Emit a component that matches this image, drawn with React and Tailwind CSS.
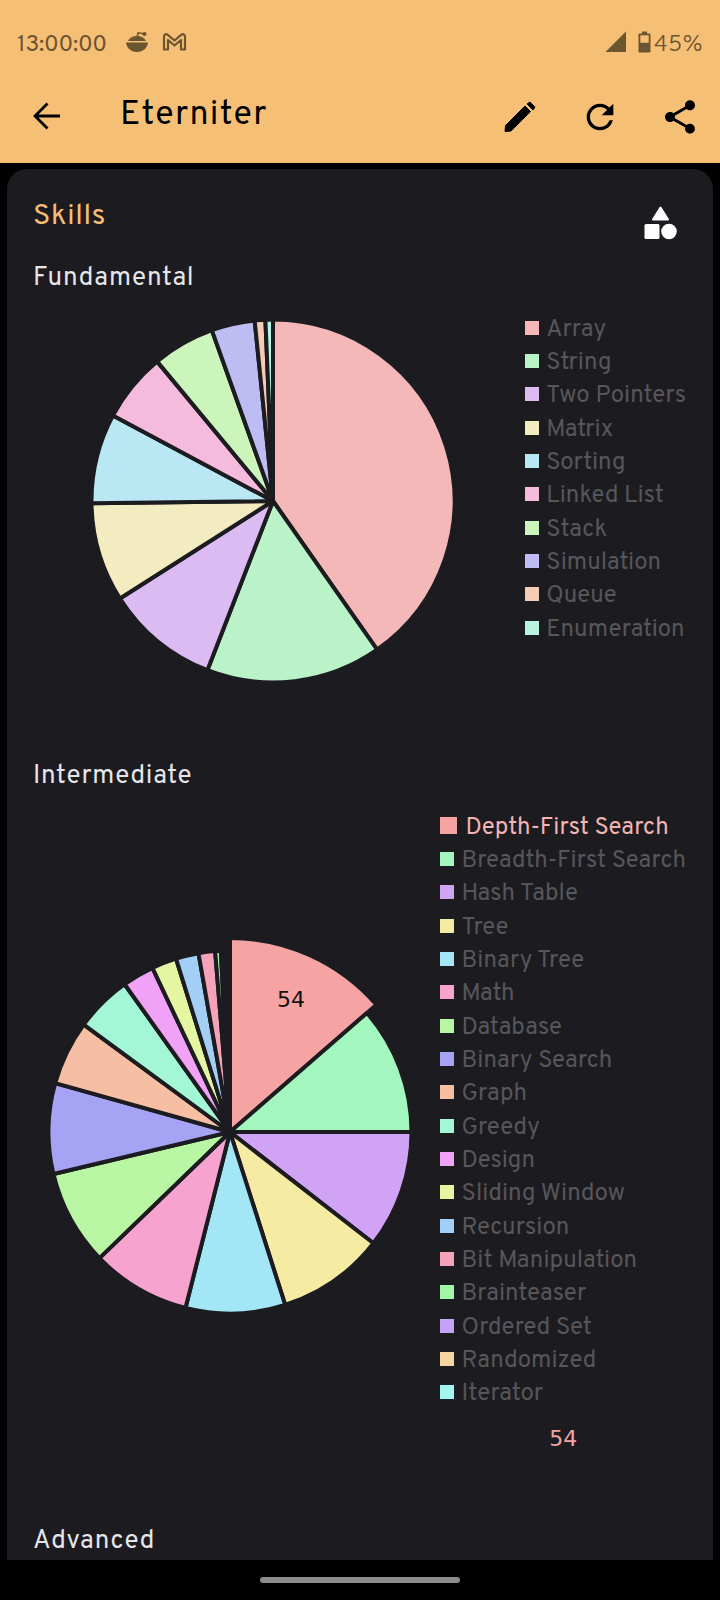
const FONT = "font-['Overpass','Roboto','Noto_Sans',sans-serif]";

const fundamental = [
  ["Array", "#F4B8B8", 145],
  ["String", "#BBF3C9", 201.2],
  ["Two Pointers", "#DBBBF2", 237.5],
  ["Matrix", "#F3ECC0", 269.3],
  ["Sorting", "#B9E8F4", 298.1],
  ["Linked List", "#F4BBDC", 320.3],
  ["Stack", "#CCF5BC", 340.3],
  ["Simulation", "#BDBDF3", 354.2],
  ["Queue", "#F4CBB3", 357.6],
  ["Enumeration", "#B8F3DF", 360],
];

const intermediate = [
  ["Depth-First Search", "#F6A3A3", 49],
  ["Breadth-First Search", "#A3F6BE", 90],
  ["Hash Table", "#D0A3F5", 127.8],
  ["Tree", "#F6EBA3", 162.3],
  ["Binary Tree", "#A3E7F6", 194.2],
  ["Math", "#F6A3D0", 226],
  ["Database", "#B9F6A3", 256.6],
  ["Binary Search", "#A6A3F5", 285.6],
  ["Graph", "#F6BFA3", 306.3],
  ["Greedy", "#A3F6D6", 324.5],
  ["Design", "#F0A3F6", 334.7],
  ["Sliding Window", "#E5F6A3", 342.7],
  ["Recursion", "#A3CFF6", 350],
  ["Bit Manipulation", "#F6A3BA", 355.3],
  ["Brainteaser", "#A3F6A8", 357.1],
  ["Ordered Set", "#C6A3F6", 358],
  ["Randomized", "#F6D5A3", 359],
  ["Iterator", "#A3F6F0", 360],
];

function slice(cx, cy, r, a0, a1) {
  const p = (a) => {
    const t = (a * Math.PI) / 180;
    return [cx + r * Math.sin(t), cy - r * Math.cos(t)];
  };
  const [x0, y0] = p(a0);
  const [x1, y1] = p(a1);
  return `M${cx} ${cy}L${x0} ${y0}A${r} ${r} 0 ${a1 - a0 > 180 ? 1 : 0} 1 ${x1} ${y1}Z`;
}

function Pie({ data, size, active, label }) {
  const c = size / 2;
  let start = 0;
  return (
    <svg width={size} height={size} viewBox={`0 0 ${size} ${size}`} className="block shrink-0">
      {data.map(([name, color, end], i) => {
        const d = slice(c, c, i === active ? 194 : 181.5, start, end);
        start = end;
        return <path key={name} d={d} fill={color} stroke="#1C1C20" strokeWidth="4" strokeLinejoin="round" />;
      })}
      {label ? (
        <text x={c + 61} y={c - 125} textAnchor="middle" fontSize="22" fontFamily="'DejaVu Sans', sans-serif" fill="#111111">
          {label}
        </text>
      ) : null}
    </svg>
  );
}

function Legend({ data, active, value }) {
  return (
    <div className="ml-[14px] flex shrink-0 flex-col">
      {data.map(([name, color], i) =>
        i === active ? (
          <div key={name} className="flex h-[33.33px] items-center">
            <span className="mr-[8px] h-[17px] w-[17px]" style={{ backgroundColor: color }} />
            <span className="pt-[4px] text-[24px] leading-none tracking-[0.05px] text-[#F4B4B4]">{name}</span>
          </div>
        ) : (
          <div key={name} className="flex h-[33.33px] items-center">
            <span className="mr-[7px] h-[14px] w-[14px]" style={{ backgroundColor: color }} />
            <span className="pt-[4px] text-[24px] leading-none tracking-[0.05px] text-[#56565B]">{name}</span>
          </div>
        )
      )}
      {value ? (
        <div className="flex h-[46px] items-end justify-center font-['DejaVu_Sans',sans-serif] text-[22px] leading-[32px] text-[#F5A3A3]">
          {value}
        </div>
      ) : null}
    </div>
  );
}

function Heading({ children }) {
  return <h2 className="-ml-[1px] flex h-[36px] items-center pt-[7px] text-[26px] tracking-[0.75px] text-[#E6E6EA]">{children}</h2>;
}

export default function App() {
  return (
    <div className={`flex h-[1600px] w-[720px] flex-col overflow-hidden bg-black ${FONT}`}>
      <header className="h-[163px] shrink-0 bg-[#F6BF76]">
        <div className="flex h-[87px] items-center text-[#6B5430]">
          <span className="ml-[17px] pt-[4px] text-[23px] leading-none tracking-[-0.2px]">13:00:00</span>
          <svg className="mb-[3px] ml-[18px]" width="24" height="22" viewBox="0 0 24 22" fill="#6B5430">
            <path d="M1 11.500h22c-.6 5.500-5 9.500-11 9.500S1.600 17 1 11.500z" />
            <path d="M3 10c1.500-3.200 5-5 9-5s7.500 1.800 9 5z" />
            <path d="M12 6l1.200-4.200 5.300 1" fill="none" stroke="#6B5430" strokeWidth="1.600" />
            <circle cx="19.500" cy="3" r="2" />
          </svg>
          <svg className="mb-[3px] ml-[13px]" width="25" height="20" viewBox="0 0 25 20" fill="none" stroke="#6B5430" strokeWidth="2.200" strokeLinejoin="round">
            <path d="M2 17.500V4.500C2 2.500 4 1.500 5.500 2.700L12.500 8.500L19.500 2.700C21 1.500 23 2.500 23 4.500V17.500H19V8L12.500 13.500L6 8V17.500Z" />
          </svg>
          <svg className="mb-[3px] ml-auto" width="22" height="22" viewBox="0 0 22 22" fill="#6B5430">
            <path d="M21 0.500V21H0.500Z" />
          </svg>
          <svg className="mb-[3px] ml-[11px]" width="13" height="22" viewBox="0 0 13 22">
            <path d="M4 0.500h5v2H11.500a1 1 0 0 1 1 1V20.500a1 1 0 0 1-1 1H1.500a1 1 0 0 1-1-1V3.500a1 1 0 0 1 1-1H4z" fill="#6B5430" />
            <rect x="2.300" y="4.300" width="8.400" height="7.500" fill="#F6BF76" />
          </svg>
          <span className="mr-[17px] ml-[3px] pt-[4px] text-[23px] leading-none font-light tracking-[0.3px]">45%</span>
        </div>
        <div className="flex h-[60px] items-center">
          <button className="mb-[2px] flex w-[94px] justify-center">
            <svg width="28" height="28" viewBox="0 0 28 28" fill="none" stroke="#000" strokeWidth="2.800">
              <path d="M27 14H2M14.500 1.500L2 14l12.500 12.500" />
            </svg>
          </button>
          <h1 className="mb-[2px] ml-[26px] text-[34px] leading-none tracking-[1.25px] text-black">Eterniter</h1>
          <div className="ml-auto flex">
            <button className="flex h-[40px] w-[80px] items-center justify-center">
              <svg width="40" height="40" viewBox="500 97 40 40" fill="#000" stroke="#000" strokeWidth="1" strokeLinejoin="round">
                <path d="M505 131.500L505.500 125.500L525 106L530.500 111.500L511 131Z" />
                <path d="M527 104L530 102L535 107L533 110Z" />
              </svg>
            </button>
            <button className="flex h-[40px] w-[80px] items-center justify-center">
              <svg width="40" height="40" viewBox="0 0 24 24" fill="#000">
                <path d="M17.650 6.350A7.958 7.958 0 0 0 12 4c-4.420 0-7.990 3.580-7.990 8s3.570 8 7.990 8c3.730 0 6.840-2.550 7.730-6h-2.080A5.990 5.990 0 0 1 12 18c-3.310 0-6-2.690-6-6s2.690-6 6-6c1.660 0 3.140.690 4.220 1.780L13 11h7V4l-2.350 2.350z" />
              </svg>
            </button>
            <button className="flex h-[40px] w-[80px] items-center justify-center">
              <svg width="40" height="40" viewBox="0 0 24 24" fill="#000">
                <path d="M18 16.080c-.760 0-1.440.300-1.960.770L8.910 12.700c.050-.230.090-.460.090-.700s-.040-.470-.090-.700l7.050-4.110c.540.500 1.250.810 2.040.810 1.660 0 3-1.340 3-3s-1.340-3-3-3-3 1.340-3 3c0 .240.040.470.090.700L8.040 9.810C7.500 9.310 6.790 9 6 9c-1.660 0-3 1.340-3 3s1.340 3 3 3c.790 0 1.500-.310 2.040-.810l7.120 4.160c-.050.210-.080.430-.080.650 0 1.610 1.310 2.920 2.920 2.920s2.920-1.310 2.920-2.920-1.310-2.920-2.920-2.920z" />
              </svg>
            </button>
          </div>
        </div>
      </header>
      <main className="mx-[7px] mt-[6px] h-[1391px] shrink-0 overflow-hidden rounded-t-[20px] bg-[#1C1C20] px-[27px]">
        <div className="flex h-[88px] items-start justify-between pt-[30px]">
          <h2 className="-ml-[1px] text-[29px] leading-[36px] tracking-[0.7px] text-[#F6BF76]">Skills</h2>
          <svg className="mt-[7px] mr-[9px]" width="33" height="34" viewBox="0 0 33 34" fill="#fff">
            <path d="M16.500 1.500L24 13.500H9Z" stroke="#fff" strokeWidth="2" strokeLinejoin="round" />
            <rect x="0.500" y="18" width="15" height="15" rx="1.500" />
            <circle cx="25" cy="25.500" r="7.800" />
          </svg>
        </div>
        <Heading>Fundamental</Heading>
        <div className="mt-[18px] flex items-start">
          <div className="flex min-w-0 flex-1 justify-center">
            <Pie data={fundamental} size={380} />
          </div>
          <Legend data={fundamental} />
        </div>
        <div className="mt-[64px]">
          <Heading>Intermediate</Heading>
        </div>
        <div className="mt-[18px] flex items-center">
          <div className="flex min-w-0 flex-1 justify-center">
            <Pie data={intermediate} size={400} active={0} label="54" />
          </div>
          <Legend data={intermediate} active={0} value="54" />
        </div>
        <div className="mt-[65px]">
          <Heading>Advanced</Heading>
        </div>
      </main>
      <div className="flex flex-1 justify-center pt-[17px]">
        <div className="h-[6px] w-[200px] rounded-full bg-[#8C8C8C]" />
      </div>
    </div>
  );
}
